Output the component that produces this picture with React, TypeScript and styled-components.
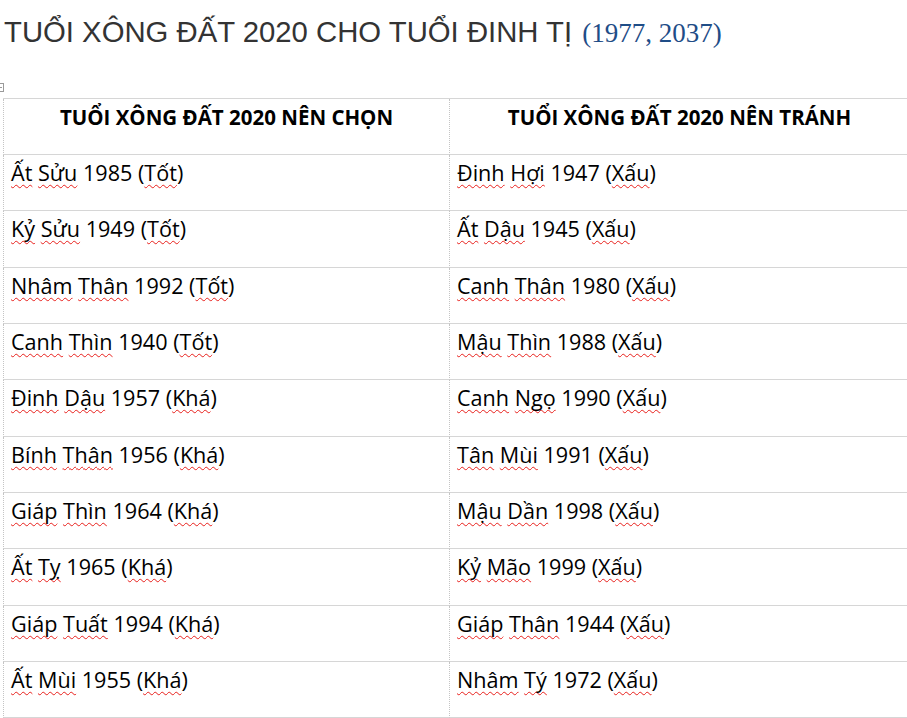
import React from "react";
import styled, { createGlobalStyle } from "styled-components";

const GlobalStyle = createGlobalStyle`
  html, body {
    margin: 0;
    padding: 0;
    background: #ffffff;
    overflow: hidden;
  }
  body {
    width: 907px;
    height: 718px;
  }
`;

const Page = styled.div`
  padding-left: 3px;
  width: 904px;
  overflow: hidden;
`;

const Title = styled.h1`
  margin: 15px 0 47.6px 1px;
  font-family: "Liberation Sans", Arial, sans-serif;
  font-weight: normal;
  font-size: 29.3px;
  line-height: 34px;
  color: #333333;
  white-space: nowrap;
`;

const Years = styled.span`
  font-family: "Liberation Serif", "Times New Roman", serif;
  font-size: 27px;
  color: #1f4d87;
  margin-left: 2px;
`;

const TableWrap = styled.div`
  position: relative;
`;

const MoveHandle = styled.div`
  position: absolute;
  left: -8px;
  top: -15px;
  width: 9px;
  height: 9px;
  border: 1px solid #9a9a9a;
  box-sizing: border-box;
  background: #fff;
  &::before,
  &::after {
    content: "";
    position: absolute;
    background: #9a9a9a;
  }
  &::before {
    left: 1px;
    right: 1px;
    top: 3px;
    height: 1px;
  }
  &::after {
    top: 1px;
    bottom: 1px;
    left: 3px;
    width: 1px;
  }
`;

const Table = styled.div`
  display: grid;
  grid-template-columns: 446px 460px;
  width: 906px;
  border-top: 1px solid #d6d6d6;
`;

const Cell = styled.div<{ $head?: boolean }>`
  box-sizing: border-box;
  height: 56.35px;
  border-bottom: 1px solid #d6d6d6;
  border-left: 1px dotted #c4c4c4;
  padding: 4px 7px 0;
  font-family: "Open Sans", "Noto Sans", sans-serif;
  font-size: ${(p) => (p.$head ? "20.5px" : "21.6px")};
  font-weight: ${(p) => (p.$head ? 700 : 400)};
  line-height: 28px;
  color: #000;
  text-align: ${(p) => (p.$head ? "center" : "left")};
  white-space: nowrap;
`;

const Misspelled = styled.span`
  text-decoration-line: underline;
  text-decoration-style: wavy;
  text-decoration-color: #e8201c;
  text-decoration-thickness: 1px;
  text-underline-offset: 3px;
  text-decoration-skip-ink: none;
`;

const chosen = [
  "Ất Sửu 1985 (Tốt)",
  "Kỷ Sửu 1949 (Tốt)",
  "Nhâm Thân 1992 (Tốt)",
  "Canh Thìn 1940 (Tốt)",
  "Đinh Dậu 1957 (Khá)",
  "Bính Thân 1956 (Khá)",
  "Giáp Thìn 1964 (Khá)",
  "Ất Tỵ 1965 (Khá)",
  "Giáp Tuất 1994 (Khá)",
  "Ất Mùi 1955 (Khá)",
];

const avoided = [
  "Đinh Hợi 1947 (Xấu)",
  "Ất Dậu 1945 (Xấu)",
  "Canh Thân 1980 (Xấu)",
  "Mậu Thìn 1988 (Xấu)",
  "Canh Ngọ 1990 (Xấu)",
  "Tân Mùi 1991 (Xấu)",
  "Mậu Dần 1998 (Xấu)",
  "Kỷ Mão 1999 (Xấu)",
  "Giáp Thân 1944 (Xấu)",
  "Nhâm Tý 1972 (Xấu)",
];

function Entry({ text }: { text: string }) {
  const words = text.split(" ");
  return (
    <>
      {words.map((w, i) => {
        const sep = i < words.length - 1 ? " " : "";
        if (/^\d+$/.test(w)) {
          return (
            <React.Fragment key={i}>
              {w}
              {sep}
            </React.Fragment>
          );
        }
        const m = w.match(/^(\(?)(.*?)(\)?)$/);
        const pre = m ? m[1] : "";
        const core = m ? m[2] : w;
        const post = m ? m[3] : "";
        return (
          <React.Fragment key={i}>
            {pre}
            <Misspelled>{core}</Misspelled>
            {post}
            {sep}
          </React.Fragment>
        );
      })}
    </>
  );
}

export default function App() {
  return (
    <>
      <GlobalStyle />
      <Page>
        <Title>
          TUỔI XÔNG ĐẤT 2020 CHO TUỔI ĐINH TỊ <Years>(1977, 2037)</Years>
        </Title>
        <TableWrap>
          <MoveHandle />
          <Table>
            <Cell $head>TUỔI XÔNG ĐẤT 2020 NÊN CHỌN</Cell>
            <Cell $head>TUỔI XÔNG ĐẤT 2020 NÊN TRÁNH</Cell>
            {chosen.map((c, i) => (
              <React.Fragment key={i}>
                <Cell>
                  <Entry text={c} />
                </Cell>
                <Cell>
                  <Entry text={avoided[i]} />
                </Cell>
              </React.Fragment>
            ))}
          </Table>
        </TableWrap>
      </Page>
    </>
  );
}
